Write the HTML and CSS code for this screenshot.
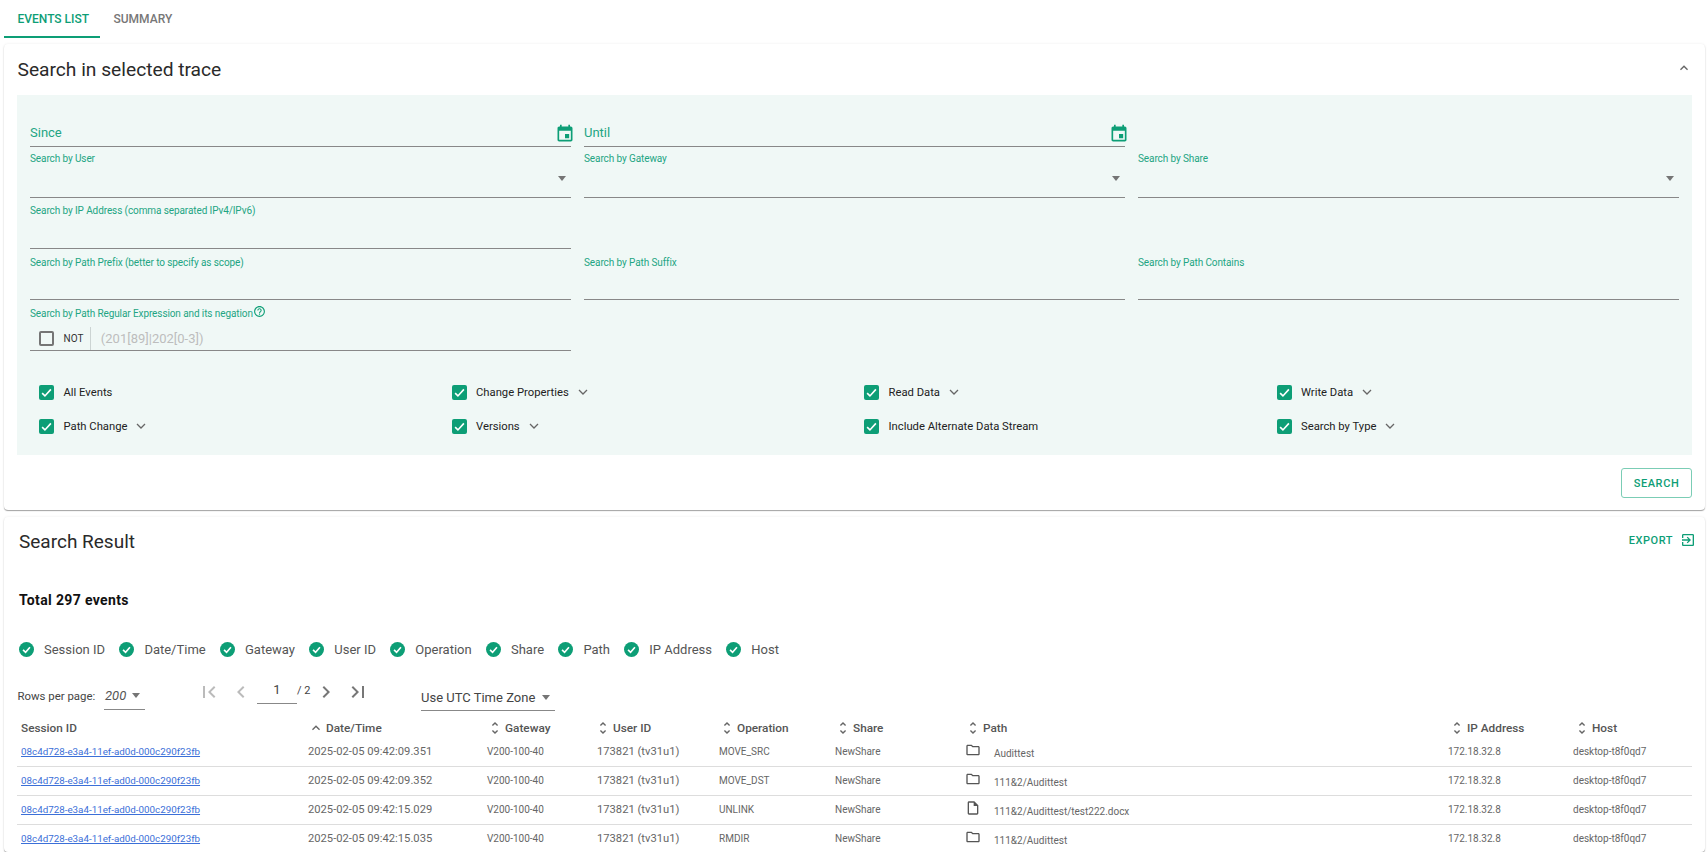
FILE: index.html
```html
<!DOCTYPE html>
<html lang="en">
<head>
<meta charset="utf-8">
<title>Events list</title>
<link rel="stylesheet" href="styles.css">
</head>
<body>
<nav class="tabs">
  <div class="tab active">EVENTS LIST</div>
  <div class="tab">SUMMARY</div>
</nav>

<section class="card search-card">
  <header class="card-head">
    <h2 class="card-title">Search in selected trace</h2>
    <svg class="collapse" viewBox="0 0 24 24"><path d="M7.41 15.41L12 10.83l4.59 4.58L18 14l-6-6-6 6z"/></svg>
  </header>
  <div class="panel">
    <div class="fields">
      <div class="field date"><span class="date-text">Since</span><svg class="cal" viewBox="0 0 24 24"><path d="M17 12h-5v5h5v-5zM16 1v2H8V1H6v2H5c-1.11 0-1.99.9-1.99 2L3 19c0 1.1.89 2 2 2h14c1.1 0 2-.9 2-2V5c0-1.1-.9-2-2-2h-1V1h-2zm3 18H5V8h14v11z"/></svg></div>
      <div class="field date"><span class="date-text">Until</span><svg class="cal" viewBox="0 0 24 24"><path d="M17 12h-5v5h5v-5zM16 1v2H8V1H6v2H5c-1.11 0-1.99.9-1.99 2L3 19c0 1.1.89 2 2 2h14c1.1 0 2-.9 2-2V5c0-1.1-.9-2-2-2h-1V1h-2zm3 18H5V8h14v11z"/></svg></div>
      <div></div>

      <div class="field"><label class="label">Search by User</label><i class="caret field-caret"></i></div>
      <div class="field"><label class="label">Search by Gateway</label><i class="caret field-caret"></i></div>
      <div class="field"><label class="label">Search by Share</label><i class="caret field-caret"></i></div>

      <div class="field"><label class="label third">Search by IP Address (comma separated IPv4/IPv6)</label></div>
      <div></div>
      <div></div>

      <div class="field"><label class="label fourth">Search by Path Prefix (better to specify as scope)</label></div>
      <div class="field"><label class="label fourth">Search by Path Suffix</label></div>
      <div class="field"><label class="label fourth">Search by Path Contains</label></div>

      <div class="field regex">
        <label class="label regex-label">Search by Path Regular Expression and its negation<svg class="help" viewBox="0 0 24 24"><path d="M11 18h2v-2h-2v2zm1-16C6.48 2 2 6.48 2 12s4.48 10 10 10 10-4.48 10-10S17.52 2 12 2zm0 18c-4.41 0-8-3.59-8-8s3.59-8 8-8 8 3.59 8 8-3.59 8-8 8zm0-14c-2.21 0-4 1.79-4 4h2c0-1.1.9-2 2-2s2 .9 2 2c0 2-3 1.75-3 5h2c0-2.25 3-2.5 3-5 0-2.21-1.79-4-4-4z"/></svg></label>
        <div class="regex-row">
          <span class="box"></span>
          <span class="not">NOT</span>
          <span class="regex-hint">(201[89]|202[0-3])</span>
        </div>
      </div>
      <div></div>
      <div></div>
    </div>

    <div class="events">
      <div class="event"><span class="box on"><svg viewBox="0 0 24 24"><path d="M5 13l4.5 4.5L19 7"/></svg></span>All Events</div>
      <div class="event"><span class="box on"><svg viewBox="0 0 24 24"><path d="M5 13l4.5 4.5L19 7"/></svg></span>Change Properties<svg class="chev" viewBox="0 0 10 6"><path d="M1 1l4 4 4-4"/></svg></div>
      <div class="event"><span class="box on"><svg viewBox="0 0 24 24"><path d="M5 13l4.5 4.5L19 7"/></svg></span>Read Data<svg class="chev" viewBox="0 0 10 6"><path d="M1 1l4 4 4-4"/></svg></div>
      <div class="event"><span class="box on"><svg viewBox="0 0 24 24"><path d="M5 13l4.5 4.5L19 7"/></svg></span>Write Data<svg class="chev" viewBox="0 0 10 6"><path d="M1 1l4 4 4-4"/></svg></div>
      <div class="event"><span class="box on"><svg viewBox="0 0 24 24"><path d="M5 13l4.5 4.5L19 7"/></svg></span>Path Change<svg class="chev" viewBox="0 0 10 6"><path d="M1 1l4 4 4-4"/></svg></div>
      <div class="event"><span class="box on"><svg viewBox="0 0 24 24"><path d="M5 13l4.5 4.5L19 7"/></svg></span>Versions<svg class="chev" viewBox="0 0 10 6"><path d="M1 1l4 4 4-4"/></svg></div>
      <div class="event"><span class="box on"><svg viewBox="0 0 24 24"><path d="M5 13l4.5 4.5L19 7"/></svg></span>Include Alternate Data Stream</div>
      <div class="event"><span class="box on"><svg viewBox="0 0 24 24"><path d="M5 13l4.5 4.5L19 7"/></svg></span>Search by Type<svg class="chev" viewBox="0 0 10 6"><path d="M1 1l4 4 4-4"/></svg></div>
    </div>
  </div>
  <div class="foot"><button class="search-btn">SEARCH</button></div>
</section>

<section class="card result-card">
  <header class="result-head">
    <h2 class="card-title">Search Result</h2>
    <div class="export">EXPORT<svg viewBox="0 0 24 24"><path d="M10.09 15.59L11.5 17l5-5-5-5-1.41 1.41L12.67 11H3v2h9.67l-2.58 2.59zM19 3H5c-1.11 0-2 .9-2 2v4h2V5h14v14H5v-4H3v4c0 1.1.89 2 2 2h14c1.1 0 2-.9 2-2V5c0-1.11-.9-2-2-2z"/></svg></div>
  </header>
  <div class="total">Total 297 events</div>
  <div class="chips">
    <div class="chip"><svg viewBox="0 0 24 24"><circle cx="12" cy="12" r="12"/><path class="tick" d="M6.5 12.5l4 4 7-8"/></svg>Session ID</div>
    <div class="chip"><svg viewBox="0 0 24 24"><circle cx="12" cy="12" r="12"/><path class="tick" d="M6.5 12.5l4 4 7-8"/></svg>Date/Time</div>
    <div class="chip"><svg viewBox="0 0 24 24"><circle cx="12" cy="12" r="12"/><path class="tick" d="M6.5 12.5l4 4 7-8"/></svg>Gateway</div>
    <div class="chip"><svg viewBox="0 0 24 24"><circle cx="12" cy="12" r="12"/><path class="tick" d="M6.5 12.5l4 4 7-8"/></svg>User ID</div>
    <div class="chip"><svg viewBox="0 0 24 24"><circle cx="12" cy="12" r="12"/><path class="tick" d="M6.5 12.5l4 4 7-8"/></svg>Operation</div>
    <div class="chip"><svg viewBox="0 0 24 24"><circle cx="12" cy="12" r="12"/><path class="tick" d="M6.5 12.5l4 4 7-8"/></svg>Share</div>
    <div class="chip"><svg viewBox="0 0 24 24"><circle cx="12" cy="12" r="12"/><path class="tick" d="M6.5 12.5l4 4 7-8"/></svg>Path</div>
    <div class="chip"><svg viewBox="0 0 24 24"><circle cx="12" cy="12" r="12"/><path class="tick" d="M6.5 12.5l4 4 7-8"/></svg>IP Address</div>
    <div class="chip"><svg viewBox="0 0 24 24"><circle cx="12" cy="12" r="12"/><path class="tick" d="M6.5 12.5l4 4 7-8"/></svg>Host</div>
  </div>

  <div class="toolbar">
    <span class="rows-label">Rows per page:</span>
    <div class="rows-select"><span>200</span><i class="caret"></i></div>
    <div class="pager">
      <svg class="pg off first" viewBox="0 0 24 24"><path d="M18.41 16.59L13.82 12l4.59-4.59L17 6l-6 6 6 6zM6 6h2v12H6z"/></svg>
      <svg class="pg off prev" viewBox="0 0 24 24"><path d="M15.41 7.41L14 6l-6 6 6 6 1.41-1.41L10.83 12z"/></svg>
      <span class="page-input">1</span>
      <span class="page-total">/ 2</span>
      <svg class="pg next" viewBox="0 0 24 24"><path d="M10 6L8.59 7.41 13.17 12l-4.58 4.59L10 18l6-6z"/></svg>
      <svg class="pg last" viewBox="0 0 24 24"><path d="M5.59 7.41L10.18 12l-4.59 4.59L7 18l6-6-6-6zM16 6h2v12h-2z"/></svg>
    </div>
    <div class="tz"><span>Use UTC Time Zone</span><i class="caret"></i></div>
  </div>

  <div class="thead">
    <div class="th first-th">Session ID</div>
    <div class="th"><svg viewBox="0 0 24 24"><path d="M7.41 15.41L12 10.83l4.59 4.58L18 14l-6-6-6 6z"/></svg>Date/Time</div>
    <div class="th"><svg viewBox="0 0 24 24"><path d="M12 5.83L15.17 9l1.41-1.41L12 3 7.41 7.59 8.83 9 12 5.83zm0 12.34L8.83 15l-1.41 1.41L12 21l4.59-4.59L15.17 15 12 18.17z"/></svg>Gateway</div>
    <div class="th"><svg viewBox="0 0 24 24"><path d="M12 5.83L15.17 9l1.41-1.41L12 3 7.41 7.59 8.83 9 12 5.83zm0 12.34L8.83 15l-1.41 1.41L12 21l4.59-4.59L15.17 15 12 18.17z"/></svg>User ID</div>
    <div class="th"><svg viewBox="0 0 24 24"><path d="M12 5.83L15.17 9l1.41-1.41L12 3 7.41 7.59 8.83 9 12 5.83zm0 12.34L8.83 15l-1.41 1.41L12 21l4.59-4.59L15.17 15 12 18.17z"/></svg>Operation</div>
    <div class="th"><svg viewBox="0 0 24 24"><path d="M12 5.83L15.17 9l1.41-1.41L12 3 7.41 7.59 8.83 9 12 5.83zm0 12.34L8.83 15l-1.41 1.41L12 21l4.59-4.59L15.17 15 12 18.17z"/></svg>Share</div>
    <div class="th"><svg viewBox="0 0 24 24"><path d="M12 5.83L15.17 9l1.41-1.41L12 3 7.41 7.59 8.83 9 12 5.83zm0 12.34L8.83 15l-1.41 1.41L12 21l4.59-4.59L15.17 15 12 18.17z"/></svg>Path</div>
    <div class="th"><svg viewBox="0 0 24 24"><path d="M12 5.83L15.17 9l1.41-1.41L12 3 7.41 7.59 8.83 9 12 5.83zm0 12.34L8.83 15l-1.41 1.41L12 21l4.59-4.59L15.17 15 12 18.17z"/></svg>IP Address</div>
    <div class="th"><svg viewBox="0 0 24 24"><path d="M12 5.83L15.17 9l1.41-1.41L12 3 7.41 7.59 8.83 9 12 5.83zm0 12.34L8.83 15l-1.41 1.41L12 21l4.59-4.59L15.17 15 12 18.17z"/></svg>Host</div>
  </div>

  <div class="tr">
    <div class="td"><a class="session" href="#">08c4d728-e3a4-11ef-ad0d-000c290f23fb</a></div>
    <div class="td num">2025-02-05 09:42:09.351</div>
    <div class="td">V200-100-40</div>
    <div class="td num">173821 (tv31u1)</div>
    <div class="td">MOVE_SRC</div>
    <div class="td">NewShare</div>
    <div class="td path"><svg viewBox="0 0 24 24"><path d="M9.17 6l2 2H20v10H4V6h5.17M10 4H4c-1.1 0-1.99.9-1.99 2L2 18c0 1.1.9 2 2 2h16c1.1 0 2-.9 2-2V8c0-1.1-.9-2-2-2h-8l-2-2z"/></svg><span>Audittest</span></div>
    <div class="td">172.18.32.8</div>
    <div class="td">desktop-t8f0qd7</div>
  </div>
  <div class="tr">
    <div class="td"><a class="session" href="#">08c4d728-e3a4-11ef-ad0d-000c290f23fb</a></div>
    <div class="td num">2025-02-05 09:42:09.352</div>
    <div class="td">V200-100-40</div>
    <div class="td num">173821 (tv31u1)</div>
    <div class="td">MOVE_DST</div>
    <div class="td">NewShare</div>
    <div class="td path"><svg viewBox="0 0 24 24"><path d="M9.17 6l2 2H20v10H4V6h5.17M10 4H4c-1.1 0-1.99.9-1.99 2L2 18c0 1.1.9 2 2 2h16c1.1 0 2-.9 2-2V8c0-1.1-.9-2-2-2h-8l-2-2z"/></svg><span>111&amp;2/Audittest</span></div>
    <div class="td">172.18.32.8</div>
    <div class="td">desktop-t8f0qd7</div>
  </div>
  <div class="tr">
    <div class="td"><a class="session" href="#">08c4d728-e3a4-11ef-ad0d-000c290f23fb</a></div>
    <div class="td num">2025-02-05 09:42:15.029</div>
    <div class="td">V200-100-40</div>
    <div class="td num">173821 (tv31u1)</div>
    <div class="td">UNLINK</div>
    <div class="td">NewShare</div>
    <div class="td path"><svg viewBox="0 0 24 24"><path d="M14 2H6c-1.1 0-1.99.9-1.99 2L4 20c0 1.1.89 2 2 2h12c1.1 0 2-.9 2-2V8l-6-6zm4 18H6V4h7v5h5v11z"/></svg><span>111&amp;2/Audittest/test222.docx</span></div>
    <div class="td">172.18.32.8</div>
    <div class="td">desktop-t8f0qd7</div>
  </div>
  <div class="tr">
    <div class="td"><a class="session" href="#">08c4d728-e3a4-11ef-ad0d-000c290f23fb</a></div>
    <div class="td num">2025-02-05 09:42:15.035</div>
    <div class="td">V200-100-40</div>
    <div class="td num">173821 (tv31u1)</div>
    <div class="td">RMDIR</div>
    <div class="td">NewShare</div>
    <div class="td path"><svg viewBox="0 0 24 24"><path d="M9.17 6l2 2H20v10H4V6h5.17M10 4H4c-1.1 0-1.99.9-1.99 2L2 18c0 1.1.9 2 2 2h16c1.1 0 2-.9 2-2V8c0-1.1-.9-2-2-2h-8l-2-2z"/></svg><span>111&amp;2/Audittest</span></div>
    <div class="td">172.18.32.8</div>
    <div class="td">desktop-t8f0qd7</div>
  </div>
</section>
</body>
</html>
```

FILE: styles.css
```css
* { box-sizing: border-box; }
html, body { height: 852px; overflow: hidden; }
body {
  margin: 0;
  padding: 0 3px 0 4px;
  background: #fff;
  font-family: Roboto, "Liberation Sans", sans-serif;
  color: #222;
}

/* tabs */
.tabs { display: flex; height: 38px; margin-bottom: 6px; }
.tab {
  padding: 12px 13.5px 0;
  font-size: 12px;
  line-height: 14px;
  font-weight: 500;
  color: #777;
  white-space: nowrap;
}
.tab.active {
  width: 96px;
  color: #0d9e76;
  border-bottom: 2px solid #0d9e76;
}

/* cards */
.card {
  background: #fff;
  border-radius: 4px;
  box-shadow: 0 1px 1px rgba(0,0,0,.35), 0 0 3px rgba(0,0,0,.07);
}
.search-card { height: 466px; margin-bottom: 7px; }
.result-card { height: 335px; overflow: hidden; }
.card-head {
  display: flex;
  align-items: center;
  justify-content: space-between;
  height: 51px;
  padding: 0 13px 0 13.5px;
}
.card-title {
  margin: 0;
  font-size: 19.2px;
  line-height: 26px;
  font-weight: 400;
  color: #2a2a2a;
}
.collapse { width: 16px; height: 16px; margin-bottom: 3px; fill: #666; }

/* filter panel */
.panel {
  height: 360px;
  margin: 0 13px;
  padding: 1px 13px 0;
  background: #f0f8f6;
}
.fields {
  display: grid;
  grid-template-columns: repeat(3, 541px);
  column-gap: 13px;
  grid-auto-rows: 51px;
}
.field {
  display: flex;
  flex-direction: column;
  border-bottom: 1px solid #888;
}
.field.date { flex-direction: row; justify-content: space-between; }
.date-text {
  margin-top: 27px;
  font-size: 13px;
  line-height: 20px;
  color: #22a583;
}
.cal { width: 20px; height: 20px; margin: 28px -4px 0 0; fill: #0d9e76; }
.label {
  margin-top: 6px;
  font-size: 10px;
  line-height: 12px;
  letter-spacing: -.1px;
  color: #22a583;
}
.label.third { margin-top: 7px; }
.label.fourth { margin-top: 8px; }
.caret {
  display: block;
  width: 0;
  height: 0;
  border-left: 4.5px solid transparent;
  border-right: 4.5px solid transparent;
  border-top: 5px solid #757575;
}
.field-caret { align-self: flex-end; margin: 11px 5px 0 0; }
.regex-label { margin-top: 8px; display: flex; align-items: flex-start; }
.help { width: 13px; height: 13px; margin-top: -3px; fill: #0d9e76; }
.regex-row { display: flex; align-items: center; height: 23px; margin-top: 7px; padding-left: 9px; }
.box {
  flex: none;
  width: 15px;
  height: 15px;
  border: 2px solid #757575;
  border-radius: 2px;
}
.not {
  height: 23px;
  margin-left: 9.5px;
  padding-right: 6.5px;
  border-right: 1px solid #ccd4d3;
  font-size: 10px;
  line-height: 23px;
  color: #333;
}
.regex-hint { margin-left: 10px; font-size: 13px; color: #bdbdbd; }

.events {
  display: grid;
  grid-template-columns: repeat(4, 412.5px);
  grid-auto-rows: 34px;
  margin-top: 24px;
  padding-left: 9px;
}
.event { display: flex; align-items: center; font-size: 11.25px; color: #222; }
.box.on {
  display: flex;
  margin-right: 9.5px;
  background: #0d9e76;
  border: 0;
}
.box.on svg { width: 15px; height: 15px; fill: none; stroke: #fff; stroke-width: 2.6; }
.chev { width: 10px; height: 6px; margin-left: 9px; fill: none; stroke: #666; stroke-width: 1.3; }

.foot { display: flex; justify-content: flex-end; padding: 13px 13px 0 0; }
.search-btn {
  width: 71px;
  height: 30px;
  padding: 0;
  background: #fff;
  border: 1px solid #7bcdb5;
  border-radius: 3px;
  font-family: inherit;
  font-size: 11px;
  font-weight: 500;
  letter-spacing: .6px;
  color: #0d9e76;
}

/* results */
.result-head {
  display: flex;
  justify-content: space-between;
  height: 50px;
  padding: 12px 9px 0 15px;
}
.result-head .card-title { font-size: 19px; }
.export {
  display: flex;
  align-items: center;
  height: 22px;
  font-size: 11px;
  font-weight: 500;
  letter-spacing: .55px;
  color: #0d9e76;
}
.export svg { width: 16px; height: 16px; margin-left: 7px; fill: #0d9e76; }
.total {
  display: flex;
  align-items: center;
  height: 66px;
  padding-left: 15px;
  font-size: 14px;
  font-weight: 700;
  letter-spacing: .35px;
  color: #111;
}
.chips { display: flex; align-items: center; height: 32px; padding-left: 15px; }
.chip {
  display: flex;
  align-items: center;
  margin-right: 14.3px;
  font-size: 13px;
  color: #555;
}
.chip svg { width: 15px; height: 15px; margin-right: 10px; fill: #0d9e76; }
.chip .tick { fill: none; stroke: #fff; stroke-width: 2.6; }

.toolbar { display: flex; align-items: flex-start; height: 49px; padding-left: 13.5px; }
.rows-label { margin-top: 24px; width: 77px; font-size: 11.4px; line-height: 14px; color: #444; white-space: nowrap; }
.rows-select {
  display: flex;
  align-items: center;
  width: 41px;
  height: 23px;
  margin: 22px 0 0 9.5px;
  padding: 0 0 6px 1px;
  border-bottom: 1px solid #888;
  font-size: 13px;
  font-style: italic;
  color: #555;
}
.rows-select .caret { margin-left: 6px; }
.pager { display: flex; align-items: center; height: 25px; margin: 14px 0 0 52px; }
.pg { width: 24px; height: 24px; flex: none; fill: #777; }
.pg.off { fill: #bbb; }
.prev { margin-left: 8px; }
.next { margin-left: 5px; }
.last { margin-left: 8px; }
.page-input {
  width: 40px;
  height: 25px;
  margin-left: 4px;
  border-bottom: 1px solid #888;
  font-size: 13px;
  line-height: 22px;
  text-align: center;
  color: #444;
}
.page-total { width: 12px; font-size: 11px; line-height: 24px; height: 25px; color: #444; white-space: nowrap; }
.tz {
  display: flex;
  align-items: center;
  width: 134px;
  height: 24px;
  margin: 22px 0 0 51px;
  padding-bottom: 2px;
  border-bottom: 1px solid #888;
  font-size: 13px;
  color: #444;
  white-space: nowrap;
}
.tz .caret { margin-left: 7px; }

.thead {
  display: grid;
  grid-template-columns: 291px 179px 108px 124px 116px 130px 484px 125px 118px;
  height: 24px;
  margin: 0 13px;
  padding-top: 4px;
}
.th {
  display: flex;
  align-items: center;
  font-size: 11.8px;
  font-weight: 500;
  color: #555;
}
.th svg { width: 16px; height: 16px; margin-right: 2px; fill: #666; }
.first-th { padding-left: 4px; }

.tr {
  display: grid;
  grid-template-columns: 287px 179px 110px 122px 116px 130px 483px 125px 123px;
  height: 29px;
  margin: 0 13px;
  border-bottom: 1px solid #ddd;
}
.td {
  display: flex;
  align-items: center;
  padding: 0 0 2px 4px;
  font-size: 10px;
  color: #666;
  white-space: nowrap;
}
.td.num { font-size: 11.2px; }
.session { font-size: 9.8px; color: #3b6fd8; }
.path svg { flex: none; width: 16px; height: 16px; margin: 0 13px 2px 0; fill: #555; }
.path span { padding-top: 4px; }
```
